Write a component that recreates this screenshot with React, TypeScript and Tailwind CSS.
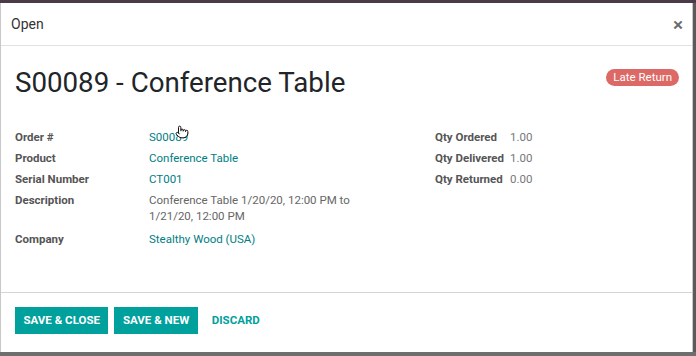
import { Pointer } from 'lucide-react'

const left = [
  { label: 'Order #', value: 'S00089', link: true, cursor: true },
  { label: 'Product', value: 'Conference Table', link: true },
  { label: 'Serial Number', value: 'CT001', link: true },
  { label: 'Description', value: 'Conference Table 1/20/20, 12:00 PM to 1/21/20, 12:00 PM', link: false },
  { label: 'Company', value: 'Stealthy Wood (USA)', link: true },
]

const right = [
  { label: 'Qty Ordered', value: '1.00' },
  { label: 'Qty Delivered', value: '1.00' },
  { label: 'Qty Returned', value: '0.00' },
]

export default function App() {
  return (
    <div className="w-[696px] h-[356px] bg-[#5a5a5a] flex flex-col overflow-hidden" style={{ fontFamily: 'Roboto, "Noto Sans", sans-serif' }}>
      {/* backdrop strip */}
      <div className="h-[3px] bg-[#4a3a4a] shrink-0" />

      <div className="w-[693px] h-[349px] bg-white flex flex-col border-l border-r border-[#c8c8c8] shrink-0">
        {/* Header */}
        <div className="h-[43px] flex items-center justify-between pl-[10px] pr-[9px] border-b border-[#dee2e6] shrink-0">
          <span className="text-[14px] text-[#333]">Open</span>
          <span className="text-[19px] font-medium text-[#6b6b6b] leading-none">×</span>
        </div>

        {/* Body */}
        <div className="h-[247px] px-[14px] pt-[20px] border-b border-[#d4d4d4] shrink-0">
          <div className="flex items-start justify-between">
            <h1 className="text-[27.7px] leading-[34px] text-[#212529]">S00089 - Conference Table</h1>
            <span className="mt-[3px] mr-[-1px] px-[7px] h-[17px] rounded-full bg-[#dc6965] text-white text-[11.5px] leading-[17px]">Late Return</span>
          </div>

          <div className="flex mt-[26px]">
            <div className="w-[420px] flex flex-col text-[11.5px] leading-[16px]">
              {left.map((r) => (
                <div key={r.label} className={`flex py-[2.5px] ${r.label === 'Company' ? 'mt-[2px]' : ''}`}>
                  <div className="w-[134px] shrink-0 font-bold text-[#555]">{r.label}</div>
                  <div className={`relative w-[215px] ${r.link ? 'text-[#017e84]' : 'text-[#666]'}`}>
                    {r.value}
                    {r.cursor && (
                      <span className="absolute left-[26px] top-[-5px]">
                        <Pointer className="w-[14px] h-[16px] text-black fill-white" strokeWidth={1.6} />
                      </span>
                    )}
                  </div>
                </div>
              ))}
            </div>
            <div className="flex flex-col text-[11.5px] leading-[16px]">
              {right.map((r) => (
                <div key={r.label} className="flex py-[2.5px]">
                  <div className="w-[75px] shrink-0 font-bold text-[#555]">{r.label}</div>
                  <div className="text-[#777]">{r.value}</div>
                </div>
              ))}
            </div>
          </div>
        </div>

        {/* Footer */}
        <div className="flex items-center gap-[6px] px-[14px] pt-[14px]">
          <button className="h-[27px] px-[8.5px] bg-[#00a09d] text-white text-[11.5px] font-bold">SAVE &amp; CLOSE</button>
          <button className="h-[27px] px-[8.5px] bg-[#00a09d] text-white text-[11.5px] font-bold">SAVE &amp; NEW</button>
          <button className="h-[27px] px-[8px] text-[#00a09d] text-[11.5px] font-bold">DISCARD</button>
        </div>
      </div>

      <div className="flex-1 bg-[#6e6e6e]" />
    </div>
  )
}
